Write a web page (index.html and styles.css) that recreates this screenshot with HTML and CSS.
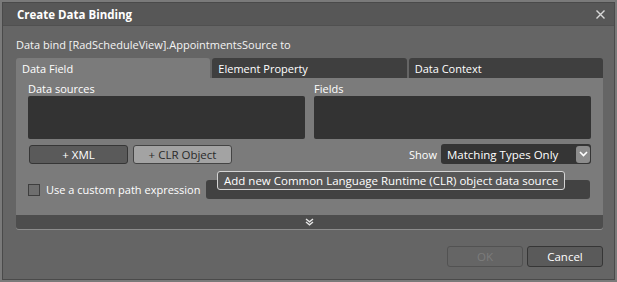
FILE: index.html
```html
<!DOCTYPE html>
<html>
<head>
    <meta charset="UTF-8">
    <title>Create Data Binding</title>
    <link rel="stylesheet" href="styles.css">
</head>
<body>
    <div class="window">
        <div class="titlebar">
            <span class="title">Create Data Binding</span>
            <svg class="close" width="9" height="9" viewBox="0 0 9 9">
                <path d="M0.5 0.5 L8.5 8.5 M8.5 0.5 L0.5 8.5" stroke="#d8d8d8" stroke-width="1.4"/>
            </svg>
        </div>

        <div class="content">
            <div class="bind-label">Data bind [RadScheduleView].AppointmentsSource to</div>

            <div class="tabs">
                <div class="tab active">Data Field</div>
                <div class="tab">Element Property</div>
                <div class="tab">Data Context</div>
            </div>

            <div class="panel">
                <div class="lists">
                    <div class="list-col">
                        <div class="list-label">Data sources</div>
                        <div class="list-box"></div>
                    </div>
                    <div class="list-col">
                        <div class="list-label">Fields</div>
                        <div class="list-box"></div>
                    </div>
                </div>

                <div class="actions">
                    <div class="left-actions">
                        <button class="btn">+ XML</button>
                        <button class="btn hover">+ CLR Object</button>
                    </div>
                    <div class="show">
                        <span>Show</span>
                        <div class="combo">
                            <span>Matching Types Only</span>
                            <div class="combo-arrow">
                                <svg width="9" height="6" viewBox="0 0 9 6">
                                    <path d="M1 1 L4.5 4.5 L8 1" stroke="#ffffff" stroke-width="1.6" fill="none"/>
                                </svg>
                            </div>
                        </div>
                    </div>
                </div>

                <div class="path-row">
                    <label class="check"><span class="box"></span>Use a custom path expression</label>
                    <div class="path-input"></div>
                </div>

                <div class="expander">
                    <svg width="9" height="8" viewBox="0 0 9 8">
                        <path d="M1 1 L4.5 3.8 L8 1 M1 4 L4.5 6.8 L8 4" stroke="#e6e6e6" stroke-width="1.4" fill="none"/>
                    </svg>
                </div>

                <div class="tooltip">Add new Common Language Runtime (CLR) object data source</div>
            </div>

            <div class="footer">
                <button class="btn wide disabled">OK</button>
                <button class="btn wide">Cancel</button>
            </div>
        </div>
    </div>
</body>
</html>
```

FILE: styles.css
```css
body {
    margin: 0;
    background: #7a7a7a;
    font-family: "Open Sans", "Noto Sans", sans-serif;
    font-size: 11px;
    color: #ffffff;
}
.window {
    width: 611px;
    height: 276px;
    margin: 2px 0 0 2px;
    border: 1px solid #4a4a4a;
    background: #656565;
    display: flex;
    flex-direction: column;
}
.titlebar {
    height: 22px;
    background: #575757;
    border-bottom: 1px solid #505050;
    display: flex;
    align-items: center;
    justify-content: space-between;
    padding: 0 9px 0 14px;
}
.title {
    font-weight: bold;
    font-size: 11.5px;
}
.content {
    padding: 0 11px 0 13px;
}
.bind-label {
    margin-top: 12px;
    line-height: 14px;
    color: #f4f4f4;
}
.tabs {
    display: flex;
    gap: 2px;
    margin-top: 6px;
}
.tab {
    flex: 1;
    height: 20px;
    line-height: 21px;
    padding-left: 6px;
    background: #3f3f3f;
    border-radius: 3px 3px 0 0;
}
.tab.active {
    background: #7b7b7b;
}
.panel {
    position: relative;
    background: #7b7b7b;
    border-radius: 0 0 3px 3px;
    border-bottom: 1px solid #8c8c8c;
}
.lists {
    display: flex;
    gap: 9px;
    padding: 3px 12px 0;
}
.list-col {
    flex: 1;
}
.list-label {
    line-height: 15px;
}
.list-box {
    height: 43px;
    background: #333333;
    border-radius: 2px;
}
.actions {
    display: flex;
    justify-content: space-between;
    align-items: center;
    padding: 5px 12px 0 13px;
}
.left-actions {
    display: flex;
    gap: 5px;
}
.btn {
    font-family: inherit;
    font-size: 11.5px;
    color: #ffffff;
    background: #5a5a5a;
    border: 1px solid #363636;
    border-radius: 3px;
    width: 99px;
    height: 19px;
    padding: 0;
}
.btn.hover {
    background: #a3a3a3;
    border-color: #444444;
    color: #2a2a2a;
}
.show {
    display: flex;
    align-items: center;
    gap: 4px;
}
.combo {
    width: 150px;
    height: 20px;
    background: #353535;
    border-radius: 3px;
    display: flex;
    align-items: center;
    justify-content: space-between;
    padding-left: 6px;
    box-sizing: border-box;
    font-size: 11.5px;
}
.combo-arrow {
    width: 14px;
    height: 17px;
    margin-right: 1px;
    background: #8c8c8c;
    border-radius: 3px;
    display: flex;
    align-items: center;
    justify-content: center;
}
.path-row {
    display: flex;
    align-items: center;
    gap: 6px;
    padding: 16px 13px 16px 12px;
}
.check {
    display: flex;
    align-items: center;
    gap: 6px;
}
.box {
    width: 10px;
    height: 10px;
    border: 1px solid #3e3e3e;
    background: #6e6e6e;
}
.path-input {
    flex: 1;
    height: 19px;
    background: #424242;
    border-radius: 3px;
}
.expander {
    height: 14px;
    background: #4d4d4d;
    border-radius: 0 0 3px 3px;
    display: flex;
    align-items: center;
    justify-content: center;
}
.tooltip {
    position: absolute;
    left: 201px;
    top: 93px;
    height: 17px;
    line-height: 17px;
    padding: 0 6px;
    background: #575757;
    border: 1px solid #d4d4d4;
    border-radius: 3px;
    font-size: 11.5px;
    color: #ffffff;
}
.footer {
    display: flex;
    justify-content: flex-end;
    gap: 4px;
    margin-top: 16px;
}
.btn.wide {
    width: 76px;
    height: 21px;
}
.btn.disabled {
    background: transparent;
    border-color: #525252;
    color: #7c7c7c;
}
```
